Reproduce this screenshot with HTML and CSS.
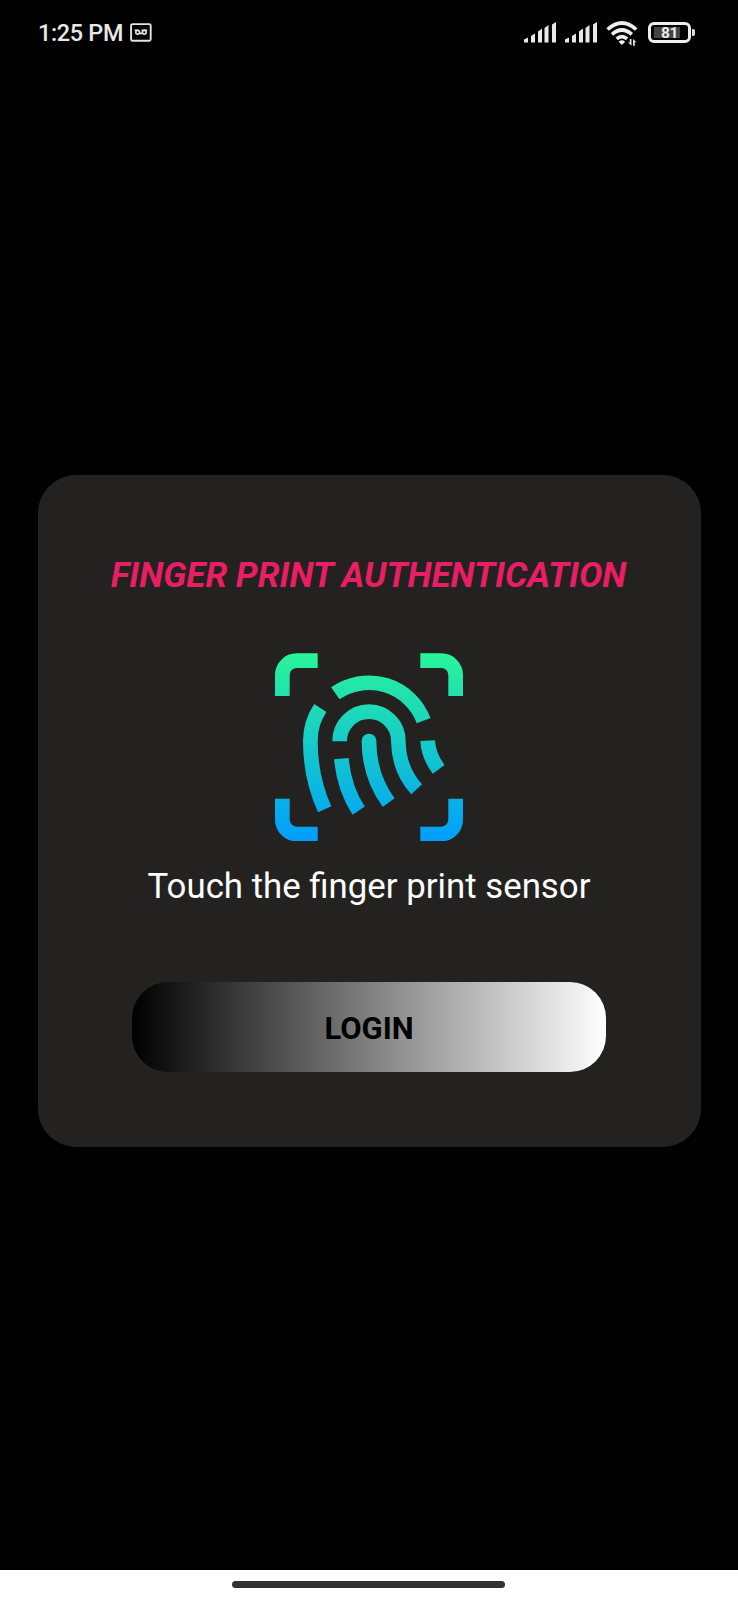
FILE: index.html
```html
<!DOCTYPE html>
<html lang="en">
<head>
<meta charset="utf-8">
<title>Finger Print Authentication</title>
<link rel="stylesheet" href="styles.css">
</head>
<body>
<div class="screen">
  <header class="status-bar">
    <div class="status-left">
      <span class="clock">1:25 PM</span>
      <svg class="voicemail" viewBox="0 0 22 19" width="22" height="19">
        <rect x="1.1" y="1.1" width="19.6" height="16.6" rx="1.5" fill="none" stroke="#e4e4e4" stroke-width="1.9"/>
        <g fill="none" stroke="#e4e4e4" stroke-width="1.6"><circle cx="7.7" cy="9.3" r="1.900"/><circle cx="14.3" cy="9.3" r="1.900"/><path d="M4.600 7.300H8M9.500 10.400h3M11.500 7.300H17.200"/></g>
      </svg>
    </div>
    <div class="status-right">
      <svg class="signal" viewBox="0 0 33 21" width="33" height="21"><g fill="#e8e8e8"><path d="M0 20.500v-3l4-2v5zM7 20.500v-6.500l4-2.500v9zM14 20.500V9.500l4-3v14zM20.500 20.500V6l4-3v17.500zM28 20.500V2.500l4-2.500v20.500z"/></g></svg>
      <svg class="signal" viewBox="0 0 33 21" width="33" height="21"><g fill="#e8e8e8"><path d="M0 20.500v-3l4-2v5zM7 20.500v-6.500l4-2.500v9zM14 20.500V9.500l4-3v14zM20.500 20.500V6l4-3v17.500zM28 20.500V2.500l4-2.500v20.500z"/></g></svg>
      <svg class="wifi" viewBox="0 0 32 25" width="32" height="25">
        <g fill="none" stroke="#eee" stroke-width="3.7"><path d="M1.600 8.500Q15.900-4.600 30.200 8.500"/><path d="M6 13.300Q15.900 4.700 25.800 13.300"/><path d="M10.700 17.800Q15.900 13.400 21.100 17.800"/></g>
        <path d="M12.700 20.700q3.200-2.700 6.400 0l-3.200 3.300z" fill="#eee"/>
        <path d="M25.500 18v6.800l-3.500-3.300h1.700V18zM27 24.800V18l3.500 3.300h-1.700v3.500z" fill="#ddd"/>
      </svg>
      <div class="battery"><span class="battery-level">81</span></div>
    </div>
  </header>

  <main class="content">
    <section class="card">
      <h1 class="title">FINGER PRINT AUTHENTICATION</h1>
      <svg class="fingerprint" viewBox="44 38 564 565" width="188" height="188.3">
        <defs>
          <linearGradient id="scan" gradientUnits="userSpaceOnUse" x1="0" y1="38" x2="0" y2="603">
            <stop offset="0" stop-color="#2af598"/>
            <stop offset="1" stop-color="#009efd"/>
          </linearGradient>
        </defs>
        <g fill="none" stroke="url(#scan)" stroke-width="44">
          <path d="M66 167V104A43 43 0 0 1 109 61H172"/>
          <path d="M480 61H543A43 43 0 0 1 586 104V167"/>
          <path d="M66 475V538A43 43 0 0 0 109 581H172"/>
          <path d="M480 581H543A43 43 0 0 0 586 538V475"/>
          <path d="M225 159A175.500 175.500 0 0 1 490 241"/>
          <path d="M180 203Q150 248 150 302Q150 412 193 507"/>
          <path d="M238 303V302A88 88 0 0 1 414 302Q415 388 469 447"/>
          <path d="M243 355Q251 444 295 511"/>
          <path d="M326 302Q326 406 385 487"/>
          <path d="M502 301Q504 346 535 387"/>
        </g>
        <circle cx="326" cy="302" r="22" fill="url(#scan)"/>
      </svg>
      <p class="hint">Touch the finger print sensor</p>
      <button class="login" type="button">LOGIN</button>
    </section>
  </main>

  <footer class="nav-bar"><div class="nav-handle"></div></footer>
</div>
</body>
</html>
```
FILE: styles.css
```css
* { box-sizing: border-box; }

body {
  margin: 0;
  background: #000;
  font-family: Roboto, "Liberation Sans", sans-serif;
}

.screen {
  display: flex;
  flex-direction: column;
  height: 1600px;
  background: #000;
}

.status-bar {
  display: flex;
  justify-content: space-between;
  height: 64px;
  padding: 0 43px 0 38px;
  color: #e8e8e8;
}

.status-left,
.status-right { display: flex; align-items: flex-start; }

.clock {
  margin-top: 19px;
  width: 92px;
  font-size: 23.4px;
  font-weight: 500;
  letter-spacing: -0.3px;
  line-height: 28px;
  white-space: nowrap;
}

.voicemail { margin-top: 22.5px; }

.signal { margin: 22px 8px 0 0; }

.wifi { margin: 20.5px 10px 0 0; }

.battery {
  position: relative;
  width: 43px;
  height: 21px;
  margin: 21.5px 4px 0 0;
  padding: 2px 3px;
  border: 3px solid #eee;
  border-radius: 6px;
}

.battery::after {
  content: "";
  position: absolute;
  left: 41px;
  top: 4px;
  width: 3px;
  height: 7px;
  border-radius: 0 2px 2px 0;
  background: #ddd;
}

.battery-level {
  display: block;
  width: 26px;
  height: 11px;
  padding-left: 7px;
  background: #444;
  color: #eee;
  font-size: 15.5px;
  font-weight: 700;
  letter-spacing: -0.5px;
  line-height: 13px;
}

.content {
  flex: 1;
  padding: 410.5px 37.5px 0;
}

.card {
  display: flex;
  flex-direction: column;
  align-items: center;
  height: 672.5px;
  padding-top: 81.5px;
  border-radius: 38px;
  background: #232220;
}

.title {
  margin: 0 1px 0 0;
  color: #e91e63;
  font-size: 35px;
  font-style: italic;
  font-weight: 700;
  line-height: 40px;
  white-space: nowrap;
}

.fingerprint { margin-top: 56.5px; }

.hint {
  margin: 25px 0 0;
  color: #fff;
  font-size: 34.8px;
  line-height: 40px;
  white-space: nowrap;
}

.login {
  width: 474px;
  height: 90px;
  margin-top: 76px;
  padding: 3px 0 0;
  border: 0;
  border-radius: 36px;
  background: linear-gradient(90deg, #000, #fff);
  color: #000;
  font-family: inherit;
  font-size: 31px;
  font-weight: 700;
}

.nav-bar {
  display: flex;
  justify-content: center;
  height: 30px;
  padding: 11px 1px 0 0;
  background: #fff;
}

.nav-handle {
  width: 273px;
  height: 7px;
  border-radius: 4px;
  background: #333;
}
```
